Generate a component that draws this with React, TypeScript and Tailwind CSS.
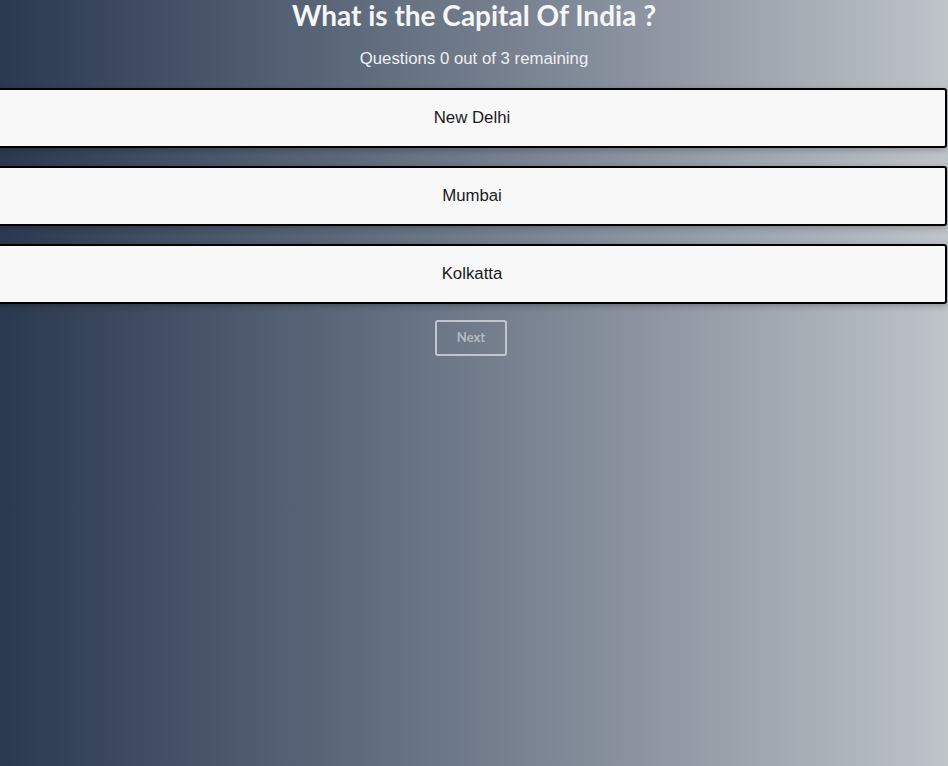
const options = ["New Delhi", "Mumbai", "Kolkatta"];

export default function App() {
  return (
    <div className="min-h-screen w-full overflow-hidden bg-gradient-to-r from-[#2b3950] to-[#bfc4c9] [font-family:'Liberation_Sans',Arial,sans-serif]">
      <div className="flex flex-col items-center">
        <h1 className="text-[28px] leading-[30px] font-bold text-[#f5f6f8] [font-family:Lato,sans-serif]">
          What is the Capital Of India ?
        </h1>
        <p className="mt-[20px] text-[16.8px] leading-[18px] text-[#eef0f3]">
          Questions 0 out of 3 remaining
        </p>
        <div className="mt-[20px] flex w-full flex-col gap-[18px]">
          {options.map((o) => (
            <button
              key={o}
              className="ml-[-3px] h-[60px] w-[950px] rounded-[3px] border-2 border-black bg-[#f8f8f8] text-[16.8px] text-[#1a1a1a] shadow-[0_2px_6px_rgba(0,0,0,0.25)]"
            >
              {o}
            </button>
          ))}
        </div>
        <button
          disabled
          className="mt-[16px] ml-[-6px] h-[36px] w-[72px] rounded-[3px] border-2 border-[#c2c6cc] text-[13px] font-bold text-[#b4b9c0] [font-family:Lato,sans-serif]"
        >
          Next
        </button>
      </div>
    </div>
  );
}
